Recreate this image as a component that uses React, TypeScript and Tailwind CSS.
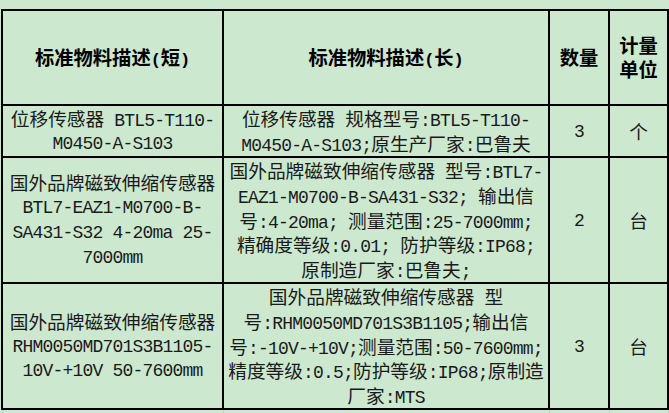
import React from 'react';

interface Row {
  short: string[];
  long: string[];
  qty: string;
  unit: string;
  height: string;
}

const rows: Row[] = [
  {
    short: ['位移传感器 BTL5-T110-', 'M0450-A-S103'],
    long: ['位移传感器 规格型号:BTL5-T110-', 'M0450-A-S103;原生产厂家:巴鲁夫'],
    qty: '3',
    unit: '个',
    height: 'h-[52px]',
  },
  {
    short: ['国外品牌磁致伸缩传感器', 'BTL7-EAZ1-M0700-B-', 'SA431-S32 4-20ma 25-', '7000mm'],
    long: [
      '国外品牌磁致伸缩传感器 型号:BTL7-',
      'EAZ1-M0700-B-SA431-S32; 输出信',
      '号:4-20ma; 测量范围:25-7000mm;',
      '精确度等级:0.01; 防护等级:IP68;',
      '原制造厂家:巴鲁夫;',
    ],
    qty: '2',
    unit: '台',
    height: 'h-[124px]',
  },
  {
    short: ['国外品牌磁致伸缩传感器', 'RHM0050MD701S3B1105-', '10V-+10V 50-7600mm'],
    long: [
      '国外品牌磁致伸缩传感器 型',
      '号:RHM0050MD701S3B1105;输出信',
      '号:-10V-+10V;测量范围:50-7600mm;',
      '精度等级:0.5;防护等级:IP68;原制造',
      '厂家:MTS',
    ],
    qty: '3',
    unit: '台',
    height: 'h-[125px]',
  },
];

const isCjk = (ch: string) => /[\u3000-\u9fff\uff00-\uffef]/.test(ch);

// 한자/영문을 나눠서 폭을 맞춘다
const splitRuns = (text: string) => {
  const runs: { cjk: boolean; text: string }[] = [];
  for (const ch of text) {
    const cjk = isCjk(ch);
    const last = runs[runs.length - 1];
    if (last && last.cjk === cjk) last.text += ch;
    else runs.push({ cjk, text: ch });
  }
  return runs;
};

const Line = ({ text, bold = false }: { text: string; bold?: boolean }) => (
  <div className={`whitespace-nowrap ${bold ? 'h-[23.3px] leading-[23.3px]' : 'h-[24.8px] leading-[24.8px]'}`}>
    {splitRuns(text).map((run, i) =>
      run.cjk ? (
        <span
          key={i}
          className={
            bold
              ? "font-['Noto_Sans_CJK_SC',sans-serif] text-[19.3px] font-bold text-black"
              : "font-['Noto_Sans_CJK_SC',sans-serif] text-[18.7px] text-[#1a1a1a]"
          }>
          {run.text}
        </span>
      ) : (
        <span
          key={i}
          className={
            bold
              ? "font-['Liberation_Mono',monospace] text-[17px] font-bold tracking-[-0.2px] text-black"
              : "font-['Liberation_Mono',monospace] text-[18px] tracking-[-0.8px] text-[#1a1a1a]"
          }>
          {run.text}
        </span>
      ),
    )}
  </div>
);

const cell = 'border-2 border-black p-0 text-center align-middle';

export default function App() {
  return (
    <div className="h-[413px] w-[669px] overflow-hidden bg-[#cce8cf] pt-[9px] pl-[1px]">
      <table className="table-fixed border-collapse">
        <colgroup>
          <col className="w-[221px]" />
          <col className="w-[326px]" />
          <col className="w-[60px]" />
          <col className="w-[59px]" />
        </colgroup>
        <thead>
          <tr className="h-[95px]">
            <th className={cell}>
              <Line text="标准物料描述(短)" bold />
            </th>
            <th className={cell}>
              <Line text="标准物料描述(长)" bold />
            </th>
            <th className={cell}>
              <Line text="数量" bold />
            </th>
            <th className={cell}>
              <Line text="计量" bold />
              <Line text="单位" bold />
            </th>
          </tr>
        </thead>
        <tbody>
          {rows.map((row, idx) => (
            <tr key={idx} className={row.height}>
              <td className={cell}>
                {row.short.map((t, i) => (
                  <Line key={i} text={t} />
                ))}
              </td>
              <td className={cell}>
                {row.long.map((t, i) => (
                  <Line key={i} text={t} />
                ))}
              </td>
              <td className={cell}>
                <Line text={row.qty} />
              </td>
              <td className={cell}>
                <Line text={row.unit} />
              </td>
            </tr>
          ))}
          <tr className="h-[12px]">
            <td className="border-x border-[#b8d6ba] p-0" />
            <td className="border-x border-[#b8d6ba] p-0" />
            <td className="border-x border-[#b8d6ba] p-0" />
            <td className="border-x border-[#b8d6ba] p-0" />
          </tr>
        </tbody>
      </table>
    </div>
  );
}
